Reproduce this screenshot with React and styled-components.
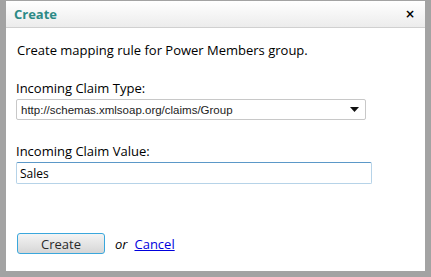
import React from 'react';
import styled, { createGlobalStyle } from 'styled-components';

const Global = createGlobalStyle`
  html, body { margin: 0; padding: 0; }
  body {
    width: 431px;
    height: 277px;
    background: #a3a3a3;
    overflow: hidden;
  }
`;

const Frame = styled.div`
  box-sizing: border-box;
  width: 431px;
  height: 277px;
  padding: 1px 6px 6px 6px;
  background: #a3a3a3;
`;

const Dialog = styled.div`
  display: flex;
  flex-direction: column;
  height: 100%;
  background: #fff;
  font-family: "Open Sans", "DejaVu Sans", sans-serif;
  font-size: 13px;
  color: #000;
`;

const Header = styled.div`
  display: flex;
  align-items: center;
  justify-content: space-between;
  height: 26px;
  padding: 0 10px 0 8px;
  background: linear-gradient(#ffffff, #ececec);
  border-bottom: 1px solid #d0d0d0;
`;

const Title = styled.span`
  color: #2c8a86;
  font-weight: bold;
  font-size: 13px;
`;

const Close = styled.span`
  font-weight: bold;
  font-size: 12px;
  font-family: "DejaVu Sans", sans-serif;
`;

const Body = styled.div`
  display: flex;
  flex-direction: column;
  flex: 1;
  padding: 13px 10px 17px 10px;
`;

const Intro = styled.p`
  margin: 0 0 20px 1px;
`;

const Field = styled.div`
  display: flex;
  flex-direction: column;
  gap: 2px;
  margin-bottom: ${p => p.$gap || 0}px;
`;

const Label = styled.label``;

const SelectBox = styled.div`
  box-sizing: border-box;
  display: flex;
  align-items: center;
  justify-content: space-between;
  width: ${p => p.$w}px;
  height: 21px;
  padding: 0 6px 0 4px;
  border: 1px solid #c8c8c8;
  border-radius: 2px;
  font-family: "Liberation Sans", Arial, sans-serif;
  font-size: 11.5px;
  color: #222;
`;

const Input = styled.div`
  box-sizing: border-box;
  display: flex;
  align-items: center;
  width: ${p => p.$w}px;
  height: 22px;
  padding: 0 3px;
  border: 1px solid #b6d3e8;
  border-top-color: #5b98c8;
  border-radius: 2px;
  font-size: 12px;
`;

const Footer = styled.div`
  display: flex;
  align-items: center;
  gap: 10px;
  margin-top: auto;
  padding-left: 1px;
`;

const Button = styled.div`
  box-sizing: border-box;
  display: flex;
  align-items: center;
  justify-content: center;
  width: 88px;
  height: 21px;
  border: 1px solid #3aa7dc;
  border-radius: 3px;
  background: linear-gradient(#f4f4f4, #d6d6d6);
  font-size: 13px;
  color: #2a2a2a;
`;

const Or = styled.span`
  font-style: italic;
`;

const Link = styled.a`
  color: #0000dd;
  text-decoration: underline;
  margin-left: -3px;
`;

export default function App() {
  return (
    <Frame>
      <Global />
      <Dialog>
        <Header>
          <Title>Create</Title>
          <Close>×</Close>
        </Header>
        <Body>
          <Intro>Create mapping rule for Power Members group.</Intro>
          <Field $gap={22}>
            <Label>Incoming Claim Type:</Label>
            <SelectBox $w={350}>
              <span>http://schemas.xmlsoap.org/claims/Group</span>
              <svg width="9" height="5" viewBox="0 0 9 5"><path d="M0 0h9L4.5 5z" fill="#111" /></svg>
            </SelectBox>
          </Field>
          <Field>
            <Label>Incoming Claim Value:</Label>
            <Input $w={356}>Sales</Input>
          </Field>
          <Footer>
            <Button role="button">Create</Button>
            <Or>or</Or>
            <Link href="#">Cancel</Link>
          </Footer>
        </Body>
      </Dialog>
    </Frame>
  );
}
